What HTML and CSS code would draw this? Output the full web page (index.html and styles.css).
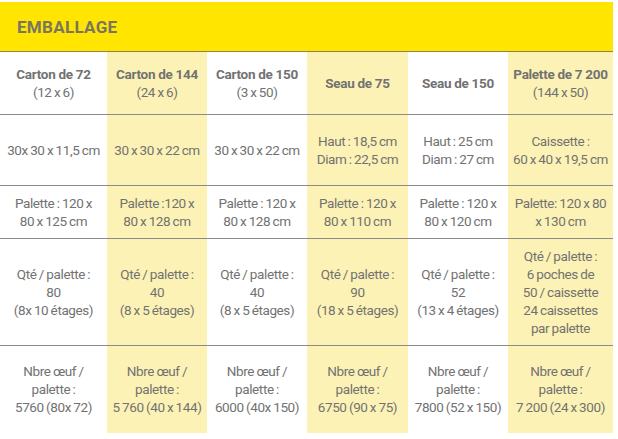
FILE: index.html
```html
<!DOCTYPE html>
<html lang="fr">
<head>
<meta charset="utf-8">
<title>Emballage</title>
<link rel="stylesheet" href="styles.css">
</head>
<body>
<div class="sheet">
  <div class="band"><h1 class="title">EMBALLAGE</h1></div>
  <table class="grid">
    <colgroup>
      <col class="c1"><col class="c2"><col class="c3"><col class="c4"><col class="c5"><col class="c6">
    </colgroup>
    <tr class="r-head">
      <th>Carton de 72<br><span class="sub">(12 x 6)</span></th>
      <th class="hl">Carton de 144<br><span class="sub">(24 x 6)</span></th>
      <th>Carton de 150<br><span class="sub">(3 x 50)</span></th>
      <th class="hl">Seau de 75</th>
      <th>Seau de 150</th>
      <th class="hl">Palette de 7 200<br><span class="sub">(144 x 50)</span></th>
    </tr>
    <tr class="r-dim">
      <td>30x 30 x 11,5 cm</td>
      <td class="hl">30 x 30 x 22 cm</td>
      <td>30 x 30 x 22 cm</td>
      <td class="hl">Haut : 18,5 cm<br>Diam : 22,5 cm</td>
      <td>Haut : 25 cm<br>Diam : 27 cm</td>
      <td class="hl">Caissette :<br>60 x 40 x 19,5 cm</td>
    </tr>
    <tr class="r-pal">
      <td>Palette : 120 x<br>80 x 125 cm</td>
      <td class="hl">Palette :120 x<br>80 x 128 cm</td>
      <td>Palette : 120 x<br>80 x 128 cm</td>
      <td class="hl">Palette : 120 x<br>80 x 110 cm</td>
      <td>Palette : 120 x<br>80 x 120 cm</td>
      <td class="hl">Palette: 120 x 80<br>x 130 cm</td>
    </tr>
    <tr class="r-qty">
      <td>Qté / palette :<br>80<br>(8x 10 étages)</td>
      <td class="hl">Qté / palette :<br>40<br>(8 x 5 étages)</td>
      <td>Qté / palette :<br>40<br>(8 x 5 étages)</td>
      <td class="hl">Qté / palette :<br>90<br>(18 x 5 étages)</td>
      <td>Qté / palette :<br>52<br>(13 x 4 étages)</td>
      <td class="hl">Qté / palette :<br>6 poches de<br>50 / caissette<br>24 caissettes<br>par palette</td>
    </tr>
    <tr class="r-egg">
      <td>Nbre œuf /<br>palette :<br>5760 (80x 72)</td>
      <td class="hl">Nbre œuf /<br>palette :<br>5 760 (40 x 144)</td>
      <td>Nbre œuf /<br>palette :<br>6000 (40x 150)</td>
      <td class="hl">Nbre œuf /<br>palette :<br>6750 (90 x 75)</td>
      <td>Nbre œuf /<br>palette :<br>7800 (52 x 150)</td>
      <td class="hl">Nbre œuf /<br>palette :<br>7 200 (24 x 300)</td>
    </tr>
  </table>
</div>
</body>
</html>
```
FILE: styles.css
```css
* { box-sizing: border-box; }
html, body { margin: 0; padding: 0; background: #ffffff; }
body {
  font-family: Roboto, "Liberation Sans", sans-serif;
  color: #727272;
}
.sheet {
  width: 613px;
  padding-top: 2px;
}
.band {
  height: 50px;
  background: #ffe500;
  border-bottom: 1px solid #8c8350;
  display: flex;
  align-items: center;
  padding-left: 17px;
}
.title {
  margin: 0;
  font-size: 17px;
  font-weight: 700;
  letter-spacing: 0.3px;
  color: #7a7560;
}
.grid {
  width: 613px;
  border-collapse: collapse;
  table-layout: fixed;
}
.c1 { width: 107px; }
.c2 { width: 100px; }
.c3 { width: 100px; }
.c4 { width: 101px; }
.c5 { width: 100px; }
.c6 { width: 105px; }
.grid th, .grid td {
  padding: 0;
  text-align: center;
  vertical-align: middle;
  border-bottom: 1px solid #8a8a8a;
  font-size: 13.5px;
  line-height: 18px;
  letter-spacing: -0.4px;
  word-spacing: -0.6px;
  white-space: nowrap;
}
.grid th {
  font-weight: 700;
  font-size: 13.5px;
  letter-spacing: -0.3px;
  word-spacing: 0;
  line-height: 18px;
}
.grid .sub { font-weight: 400; font-size: 13.5px; letter-spacing: -0.4px; word-spacing: -0.6px; }
.grid .hl { background: #fdf2b5; }
.r-head { height: 62px; }
.r-dim { height: 71px; }
.r-pal { height: 53px; }
.r-qty { height: 107px; }
.r-egg { height: 88px; }
.r-egg td { border-bottom: none; }
```
